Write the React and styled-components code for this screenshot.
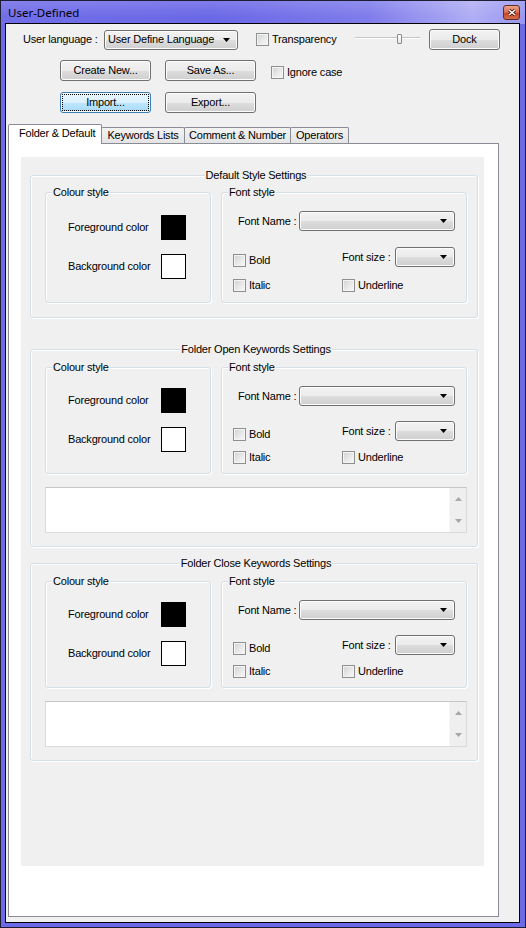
import React from "react";
import styled, { createGlobalStyle } from "styled-components";

const GlobalStyle = createGlobalStyle`
  html, body { margin: 0; padding: 0; background: #fff; }
  body {
    font-family: "Liberation Sans", Arial, sans-serif;
    font-size: 11px;
    line-height: 13px;
    letter-spacing: -0.2px;
    color: #000;
  }
  * { box-sizing: border-box; }
`;

const Window = styled.div`
  width: 526px;
  height: 928px;
  display: flex;
  flex-direction: column;
  border: 1px solid #1d1d33;
  padding: 0 5px 4px 4px;
  background:
    linear-gradient(to bottom, rgba(255, 255, 255, 0.14), rgba(255, 255, 255, 0) 70%) top / 100% 23px no-repeat,
    linear-gradient(to right, #716ee8 0%, #6b68e7 40%, #7f7ceb 70%, #b0aef4 90%, #9896f0 100%) top / 100% 23px no-repeat,
    #6d6ae8;
`;

const TitleBar = styled.div`
  height: 22px;
  display: flex;
  align-items: center;
  padding-left: 3px;
  font-family: "Noto Sans", "Liberation Sans", sans-serif;
  font-size: 11.5px;
  letter-spacing: 0;
`;

const CloseButton = styled.div`
  margin-left: auto;
  align-self: flex-start;
  margin-top: 4px;
  width: 17px;
  height: 15px;
  border: 1px solid #6b2a1c;
  border-radius: 3px;
  background: linear-gradient(#eaa58f 0%, #d8694b 50%, #c4401c 51%, #d26f4f 100%);
  display: flex;
  align-items: center;
  justify-content: center;
`;

const Client = styled.div`
  flex: 1;
  display: flex;
  flex-direction: column;
  border: 1px solid #000;
  background: #f0f0f0;
`;

const TopArea = styled.div`
  padding: 5px 0 0 17px;
`;

const Row = styled.div`
  display: flex;
  align-items: center;
  height: 21px;
  margin-top: ${(p) => p.$mt || 0}px;
  padding-left: ${(p) => p.$indent || 0}px;
`;

const FieldLabel = styled.span`
  width: ${(p) => (p.$w ? p.$w + "px" : "auto")};
  flex: none;
  white-space: nowrap;
`;

const Button = styled.div`
  width: ${(p) => p.$w}px;
  height: 21px;
  margin-left: ${(p) => p.$ml || 0}px;
  flex: none;
  border: 1px solid ${(p) => (p.$focused ? "#3c7fb1" : "#707070")};
  border-radius: 3px;
  background: ${(p) =>
    p.$focused
      ? "linear-gradient(#eaf6fd 0%, #d9f0fc 50%, #bee6fd 51%, #a7d9f5 100%)"
      : "linear-gradient(#f2f2f2 0%, #ebebeb 50%, #dddddd 51%, #cfcfcf 100%)"};
  box-shadow: inset 0 0 0 1px ${(p) => (p.$focused ? "#f4fbfe" : "#fcfcfc")};
  outline: ${(p) => (p.$focused ? "1px dotted #000" : "none")};
  outline-offset: -3px;
  display: flex;
  align-items: center;
  justify-content: center;
`;

const Combo = styled.div`
  width: ${(p) => (p.$w ? p.$w + "px" : "auto")};
  flex: ${(p) => (p.$w ? "none" : 1)};
  height: 20px;
  border: 1px solid #707070;
  border-radius: 3px;
  background: linear-gradient(#f2f2f2 0%, #ebebeb 50%, #dddddd 51%, #cfcfcf 100%);
  box-shadow: inset 0 0 0 1px #fcfcfc;
  display: flex;
  align-items: center;
  padding: 0 7px 0 3px;
`;

const ComboText = styled.span`
  flex: 1;
  white-space: nowrap;
  overflow: hidden;
`;

const CheckLabel = styled.label`
  display: flex;
  align-items: center;
  gap: 3px;
  width: ${(p) => (p.$w ? p.$w + "px" : "auto")};
  margin-left: ${(p) => p.$ml || 0}px;
  margin-top: ${(p) => p.$mt || 0}px;
  flex: none;
  white-space: nowrap;
`;

const Box = styled.span`
  width: 13px;
  height: 13px;
  flex: none;
  border: 1px solid #8e8f8f;
  background: linear-gradient(135deg, #cfd1d5 0%, #e9e9ea 55%, #f8f8f8 100%);
  box-shadow: inset 0 0 0 1px #f4f4f4;
`;

const Slider = styled.div`
  width: 65px;
  height: 21px;
  flex: none;
  display: flex;
  align-items: center;
  background: linear-gradient(
    to bottom,
    transparent 8px,
    #c4c4c4 8px,
    #c4c4c4 9px,
    #ffffff 9px,
    #ffffff 10px,
    transparent 10px
  );
`;

const Thumb = styled.span`
  width: 5px;
  height: 10px;
  margin-left: ${(p) => p.$at}px;
  margin-top: -1px;
  border: 1px solid #8a8a8a;
  border-radius: 1px;
  background: linear-gradient(#ffffff, #e4e4e4);
`;

const TabControl = styled.div`
  flex: 1;
  display: flex;
  flex-direction: column;
  margin: 11px 20px 5px 2px;
`;

const TabStrip = styled.div`
  display: flex;
  align-items: flex-end;
  height: 19px;
`;

const Tab = styled.div`
  position: relative;
  z-index: ${(p) => (p.$active ? 2 : 1)};
  width: ${(p) => p.$w}px;
  height: ${(p) => (p.$active ? 20 : 16)}px;
  margin-left: ${(p) => (p.$first ? 0 : -1)}px;
  margin-bottom: ${(p) => (p.$active ? -1 : 0)}px;
  border: 1px solid #898c95;
  border-bottom: none;
  border-radius: 2px 2px 0 0;
  background: ${(p) => (p.$active ? "#fff" : "linear-gradient(#f3f3f3, #e4e4e4)")};
  display: flex;
  align-items: center;
  justify-content: ${(p) => (p.$active ? "flex-start" : "center")};
  padding-left: ${(p) => (p.$active ? 10 : 0)}px;
  padding-bottom: ${(p) => (p.$active ? 2 : 0)}px;
  white-space: nowrap;
`;

const Panel = styled.div`
  flex: 1;
  border: 1px solid #898c95;
  background: #fff;
  padding: 13px 0 0 12px;
`;

const Sheet = styled.div`
  width: 463px;
  height: 709px;
  background: #f0f0f0;
  padding: 12px 0 0 9px;
`;

const Group = styled.fieldset`
  margin: ${(p) => p.$mt || 0}px 0 0;
  padding: ${(p) => p.$pad};
  width: ${(p) => p.$w}px;
  min-inline-size: 0;
  flex: none;
  border: 1px solid #d5dfe5;
  border-radius: 3px;
  box-shadow: inset 1px 1px 0 #fff, 1px 1px 0 #fff;
`;

const Caption = styled.legend`
  height: 12px;
  line-height: 12px;
  padding: 0 1px;
  margin-left: ${(p) => (p.$center ? "auto" : p.$x + "px")};
  margin-right: ${(p) => (p.$center ? "auto" : "0")};
  background: #f0f0f0;
  white-space: nowrap;
`;

const InnerRow = styled.div`
  display: flex;
  align-items: stretch;
  gap: 10px;
`;

const ColorGrid = styled.div`
  display: grid;
  grid-template-columns: 93px 25px;
  row-gap: 14px;
  align-items: center;
`;

const Swatch = styled.span`
  width: 25px;
  height: 25px;
  border: 1px solid #000;
  background: ${(p) => p.$color};
`;

const FontNameRow = styled.div`
  display: flex;
  align-items: center;
  gap: 4px;
  padding-left: 5px;
  height: 20px;
`;

const FontGrid = styled.div`
  display: grid;
  grid-template-columns: 109px 1fr;
  margin-top: ${(p) => p.$mt}px;
  height: ${(p) => p.$h}px;
  align-items: end;
`;

const SizeCell = styled.div`
  display: flex;
  align-items: center;
  justify-content: space-between;
`;

const Memo = styled.div`
  display: flex;
  justify-content: flex-end;
  height: 46px;
  margin-top: 13px;
  background: #fff;
  border: 1px solid #dadada;
  border-top-color: #c6c6c6;
`;

const ScrollBar = styled.div`
  width: 17px;
  background: #efefef;
  border-left: 1px solid #f7f7f7;
  display: flex;
  flex-direction: column;
  align-items: center;
  justify-content: space-between;
  padding: 9px 0 9px;
`;

const Arrow = ({ up, color = "#000" }) => (
  <svg width="7" height="4" viewBox="0 0 7 4" style={{ flex: "none" }}>
    <path d={up ? "M0 4h7L3.5 0z" : "M0 0h7L3.5 4z"} fill={color} />
  </svg>
);

const Check = ({ children, w, ml, mt }) => (
  <CheckLabel $w={w} $ml={ml} $mt={mt}>
    <Box />
    {children}
  </CheckLabel>
);

const StyleGroup = ({ title, first, mt }) => {
  const roomy = !!first;
  return (
    <Group
      $w={448}
      $mt={mt}
      $pad={roomy ? "5px 10px 14px 14px" : "6px 10px 13px 14px"}
    >
      <Caption $center>{title}</Caption>
      <InnerRow>
        <Group $w={166} $pad={roomy ? "17px 0 23px 22px" : "15px 0 21px 22px"}>
          <Caption $x={-16}>Colour style</Caption>
          <ColorGrid>
            <span>Foreground color</span>
            <Swatch $color="#000" />
            <span>Background color</span>
            <Swatch $color="#fff" />
          </ColorGrid>
        </Group>
        <Group $w={246} $pad={roomy ? "13px 11px 9px 11px" : "13px 11px 8px 11px"}>
          <Caption $x={-5}>Font style</Caption>
          <FontNameRow>
            <FieldLabel $w={57}>Font Name :</FieldLabel>
            <Combo>
              <ComboText />
              <Arrow />
            </Combo>
          </FontNameRow>
          <FontGrid $mt={roomy ? 16 : 15} $h={20}>
            <Check>Bold</Check>
            <SizeCell>
              <FieldLabel>Font size :</FieldLabel>
              <Combo $w={60}>
                <ComboText />
                <Arrow />
              </Combo>
            </SizeCell>
          </FontGrid>
          <FontGrid $mt={roomy ? 12 : 10} $h={13}>
            <Check>Italic</Check>
            <Check>Underline</Check>
          </FontGrid>
        </Group>
      </InnerRow>
      {!first && (
        <Memo>
          <ScrollBar>
            <Arrow up color="#a6a6a6" />
            <Arrow color="#a6a6a6" />
          </ScrollBar>
        </Memo>
      )}
    </Group>
  );
};

const App = () => (
  <>
    <GlobalStyle />
    <Window>
      <TitleBar>
        <span>User-Defined</span>
        <CloseButton>
          <svg width="8" height="7" viewBox="0 0 8 7">
            <path d="M1 1l6 5M7 1L1 6" stroke="#4a1408" strokeWidth="3" />
            <path d="M1 1l6 5M7 1L1 6" stroke="#fff" strokeWidth="1.6" />
          </svg>
        </CloseButton>
      </TitleBar>
      <Client>
        <TopArea>
          <Row>
            <FieldLabel $w={81}>User language :</FieldLabel>
            <Combo $w={134}>
              <ComboText>User Define Language</ComboText>
              <Arrow />
            </Combo>
            <Check w={99} ml={18}>
              Transparency
            </Check>
            <Slider>
              <Thumb $at={42} />
            </Slider>
            <Button $w={71} $ml={9}>
              Dock
            </Button>
          </Row>
          <Row $mt={10} $indent={37}>
            <Button $w={91}>Create New...</Button>
            <Button $w={91} $ml={14}>
              Save As...
            </Button>
            <Check ml={15} mt={3}>
              Ignore case
            </Check>
          </Row>
          <Row $mt={11} $indent={37}>
            <Button $w={91} $focused>
              Import...
            </Button>
            <Button $w={91} $ml={14}>
              Export...
            </Button>
          </Row>
        </TopArea>
        <TabControl>
          <TabStrip>
            <Tab $w={94} $active $first>
              Folder &amp; Default
            </Tab>
            <Tab $w={84}>Keywords Lists</Tab>
            <Tab $w={107}>Comment &amp; Number</Tab>
            <Tab $w={59}>Operators</Tab>
          </TabStrip>
          <Panel>
            <Sheet>
              <StyleGroup title="Default Style Settings" first />
              <StyleGroup title="Folder Open Keywords Settings" mt={25} />
              <StyleGroup title="Folder Close Keywords Settings" mt={10} />
            </Sheet>
          </Panel>
        </TabControl>
      </Client>
    </Window>
  </>
);

export default App;
